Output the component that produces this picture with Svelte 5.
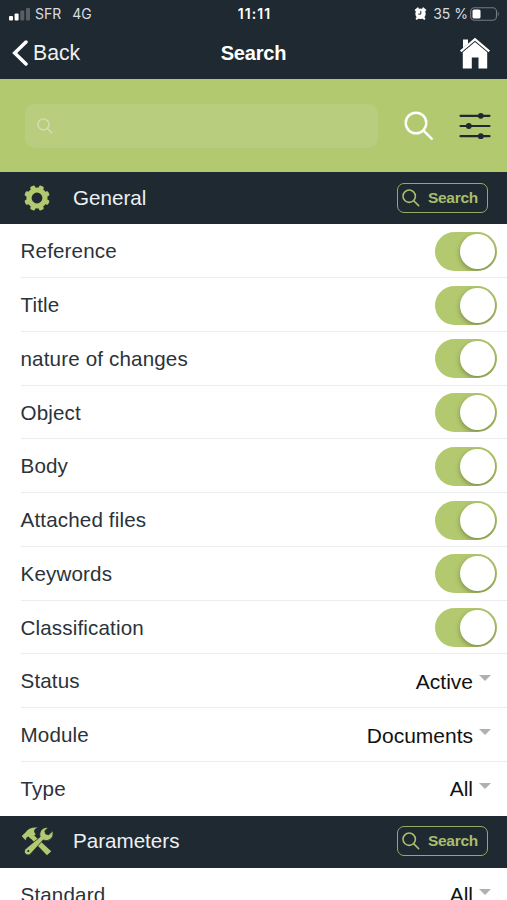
<script lang="ts">
	type Row = { label: string; on?: boolean; value?: string };

	let general: Row[] = $state([
		{ label: 'Reference', on: true },
		{ label: 'Title', on: true },
		{ label: 'nature of changes', on: true },
		{ label: 'Object', on: true },
		{ label: 'Body', on: true },
		{ label: 'Attached files', on: true },
		{ label: 'Keywords', on: true },
		{ label: 'Classification', on: true },
		{ label: 'Status', value: 'Active' },
		{ label: 'Module', value: 'Documents' },
		{ label: 'Type', value: 'All' }
	]);

	let parameters: Row[] = $state([{ label: 'Standard', value: 'All' }]);

	let query = $state('');
</script>

{#snippet magnifier(width: number)}
	<svg class="magnifier" viewBox="0 0 30 30" fill="none" stroke="currentColor" stroke-width={width}>
		<circle cx="12" cy="12" r="10.3" />
		<path d="M19.3 19.3 28.5 28.5" />
	</svg>
{/snippet}

{#snippet gear()}
	<svg width="26" height="26" viewBox="-13 -13 26 26">
		<circle r="8" fill="none" stroke="#b3c970" stroke-width="5.2" />
		{#each [22.5, 67.5, 112.5, 157.5, 202.5, 247.5, 292.5, 337.5] as angle}
			<rect x="-2.5" y="-12.8" width="5" height="5" rx="1.5" fill="#b3c970" transform="rotate({angle})" />
		{/each}
	</svg>
{/snippet}

{#snippet tools()}
	<svg width="33" height="30" viewBox="0 0 33 30">
		<g fill="#b3c970">
			<path d="M11.5 8 30.2 25.2 26 29.3 8.6 11.2z" />
			<path d="M1 9.7 4.7 6.3C7 2.8 11 .9 16.8 1.6c-2.5 1-4 2.2-3.7 4.4l1.6 2.2-4.9 4.6-2.3-2.2-2 .8-.8 2.8L1 10.6z" />
			<path d="M25.8 1.4a7 7 0 0 0-6.6 9.4L5 22.4a3.6 3.6 0 1 0 5 5L22.2 14A7 7 0 0 0 32 6.2l-.2-1.4-4 4-3.2-.8-.8-3.2 3.6-3.3z" stroke="#1f2932" stroke-width=".8" />
		</g>
		<circle cx="7.3" cy="25" r="1.1" fill="#1f2932" />
	</svg>
{/snippet}

{#snippet sectionHeader(title: string, icon: any)}
	<div class="section-header">
		<span class="section-icon">{@render icon()}</span>
		<h2>{title}</h2>
		<button class="search-button">
			{@render magnifier(2.6)}
			<span>Search</span>
		</button>
	</div>
{/snippet}

{#snippet list(rows: Row[])}
	<ul>
		{#each rows as row}
			<li>
				<span>{row.label}</span>
				{#if row.value}
					<span class="value">{row.value}<i class="caret"></i></span>
				{:else}
					<button
						class="toggle"
						class:on={row.on}
						role="switch"
						aria-checked={row.on}
						aria-label={row.label}
						onclick={() => (row.on = !row.on)}
					></button>
				{/if}
			</li>
		{/each}
	</ul>
{/snippet}

<div class="screen">
	<header>
		<div class="status-bar">
			<div class="carrier">
				<svg width="22" height="14" viewBox="0 0 22 14" fill="#fff">
					<rect x="0" y="9" width="4" height="4.5" rx="1" />
					<rect x="5.6" y="6.5" width="4" height="7" rx="1" />
					<rect x="11.3" y="3.5" width="4" height="10" rx="1" opacity=".25" />
					<rect x="17" y="1" width="4" height="12.5" rx="1" opacity=".25" />
				</svg>
				<span>SFR</span>
				<span class="network">4G</span>
			</div>
			<div class="time">11:11</div>
			<div class="battery">
				<svg width="13" height="13" viewBox="0 0 13 13">
					<path d="M1.8 3.2 3.8 1.4M11.2 3.2 9.2 1.4M2.7 11.8l1.2-1.3M10.3 11.8l-1.2-1.3" stroke="#fff" stroke-width="2" stroke-linecap="round" />
					<circle cx="6.5" cy="6.8" r="5.2" fill="#fff" />
					<path d="M6.8 3.8v3.3H4.3" fill="none" stroke="#1f2932" stroke-width="1" />
				</svg>
				<span>35 %</span>
				<svg class="cell" width="30" height="14" viewBox="0 0 30 14">
					<rect x=".7" y=".7" width="25.8" height="12.6" rx="3.8" fill="none" stroke="#747b81" stroke-width="1.1" />
					<rect x="2.5" y="2.5" width="8" height="9" rx="1.6" fill="#fff" />
					<path d="M27.8 4.8q2.2 2.2 0 4.4z" fill="#747b81" />
				</svg>
			</div>
		</div>
		<nav>
			<button class="back">
				<svg width="16" height="26" viewBox="0 0 16 26" fill="none" stroke="#fff" stroke-width="3.5">
					<path d="M14 2 2.7 13 14 24" stroke-linecap="round" />
				</svg>
				<span>Back</span>
			</button>
			<h1>Search</h1>
			<button class="home" aria-label="Home">
				<svg width="32" height="32" viewBox="0 0 32 32" fill="#fff">
					<path d="M4 2.5h5v4.2l-5 4.6z" />
					<path d="M16 .8 31 13.5l-1.4 1.7L16 3.8 2.4 15.2 1 13.5z" />
					<path d="M16 5 28.2 15.2V31.5H19.5V20.5H12.8v11H3.8V15.2z" />
				</svg>
			</button>
		</nav>
	</header>

	<div class="search-bar">
		<label class="field">
			{@render magnifier(2.6)}
			<input type="text" bind:value={query} aria-label="Search" />
		</label>
		<button class="submit" aria-label="Run search">{@render magnifier(2.4)}</button>
		<button class="filters" aria-label="Filters">
			<svg width="32" height="28" viewBox="0 0 32 28" fill="#1f2932">
				<path d="M1.5 3.8h29M1.5 14h29M1.5 24.2h29" stroke="#1f2932" stroke-width="2.2" stroke-linecap="round" />
				<circle cx="21.8" cy="3.8" r="2.9" />
				<circle cx="9.8" cy="14" r="2.9" />
				<circle cx="21.8" cy="24.2" r="2.9" />
			</svg>
		</button>
	</div>

	{@render sectionHeader('General', gear)}
	{@render list(general)}
	{@render sectionHeader('Parameters', tools)}
	{@render list(parameters)}
</div>

<style>
	:global(body) {
		background: #fff;
		overflow: hidden;
	}

	.screen {
		width: 507px;
		height: 900px;
		overflow: hidden;
		font-family: 'Liberation Sans', Arial, sans-serif;
		font-size: 20.6px;
		color: #2b333a;
	}

	button {
		padding: 0;
		border: 0;
		background: none;
		font: inherit;
		color: inherit;
	}

	svg {
		display: block;
		flex: none;
	}

	header {
		height: 79px;
		background: #1f2932;
		color: #fff;
	}

	.status-bar {
		display: grid;
		grid-template-columns: 1fr auto 1fr;
		align-items: center;
		height: 27px;
		padding: 0 7px 0 9px;
		font-family: Inter, 'Liberation Sans', sans-serif;
		font-size: 14px;
		color: #d9dde0;
	}

	.carrier,
	.battery {
		display: flex;
		align-items: center;
	}

	.carrier {
		gap: 4px;
	}

	.network {
		margin-left: 7px;
	}

	.time {
		font-weight: 600;
		letter-spacing: 1.1px;
		color: #fff;
	}

	.battery {
		justify-content: flex-end;
		gap: 6px;
	}

	.cell {
		margin-left: -4px;
	}

	nav {
		display: grid;
		grid-template-columns: 1fr auto 1fr;
		align-items: center;
		height: 52px;
		padding: 0 16px 0 12px;
	}

	.back {
		display: flex;
		align-items: center;
		gap: 5px;
		font-size: 21.2px;
		color: #eef0f2;
	}

	h1 {
		margin: 0 0 0 4px;
		font-size: 20px;
		letter-spacing: -0.2px;
	}

	.home {
		justify-self: end;
	}

	.search-bar {
		display: flex;
		align-items: center;
		height: 93px;
		padding: 0 16px 0 25px;
		background: #b3c970;
		box-sizing: border-box;
	}

	.field {
		display: flex;
		align-items: center;
		width: 353px;
		height: 44px;
		padding: 0 12px;
		border-radius: 10px;
		background: #b9cd7e;
		color: #d5e0b0;
		box-sizing: border-box;
	}

	.field :global(.magnifier) {
		width: 16px;
		height: 16px;
	}

	input {
		flex: 1;
		min-width: 0;
		border: 0;
		outline: 0;
		background: none;
		font: inherit;
	}

	.submit {
		margin-left: 26px;
		color: #fff;
	}

	.magnifier {
		width: 30px;
		height: 30px;
	}

	.filters {
		margin-left: auto;
	}

	.section-header {
		display: flex;
		align-items: center;
		height: 52.4px;
		padding: 0 19px 1px 20px;
		background: #1f2932;
		box-sizing: border-box;
		color: #edf0f2;
	}

	.section-icon {
		display: flex;
		justify-content: center;
		width: 34px;
		margin-right: 19px;
	}

	h2 {
		flex: 1;
		margin: 0;
		font-size: 20.6px;
		font-weight: 400;
	}

	.search-button {
		display: flex;
		align-items: center;
		gap: 8px;
		width: 91px;
		height: 30px;
		padding-left: 4px;
		border: 1.5px solid #97aa65;
		border-radius: 7px;
		box-sizing: border-box;
		font-size: 15.5px;
		font-weight: 700;
		letter-spacing: -0.3px;
		color: #a9be6c;
	}

	.search-button :global(.magnifier) {
		width: 18px;
		height: 18px;
	}

	ul {
		margin: 0;
		padding: 0 0 0 20.5px;
		list-style: none;
	}

	li {
		display: flex;
		align-items: center;
		justify-content: space-between;
		height: 53.76px;
		padding: 1px 10px 0 0;
		border-bottom: 1px solid #ebecee;
		box-sizing: border-box;
		letter-spacing: 0.15px;
	}

	li:last-child {
		border-bottom-color: transparent;
	}

	.toggle {
		width: 62px;
		height: 39px;
		padding: 2px;
		border-radius: 20px;
		background: #d8dadc;
		overflow: hidden;
	}

	.toggle::before {
		content: '';
		display: block;
		width: 35px;
		height: 35px;
		border-radius: 50%;
		background: #fff;
		box-shadow: 0 2px 5px rgba(50, 65, 10, 0.45);
	}

	.toggle.on {
		background: #b3c970;
	}

	.toggle.on::before {
		margin-left: auto;
	}

	.value {
		display: flex;
		align-items: center;
		gap: 6px;
		padding: 1px 6px 0 0;
		font-size: 21px;
		letter-spacing: 0;
		color: #111;
	}

	.caret {
		margin-top: -7px;
		border: 6px solid transparent;
		border-top: 6.5px solid #b0b0b0;
		border-bottom: 0;
	}
</style>
